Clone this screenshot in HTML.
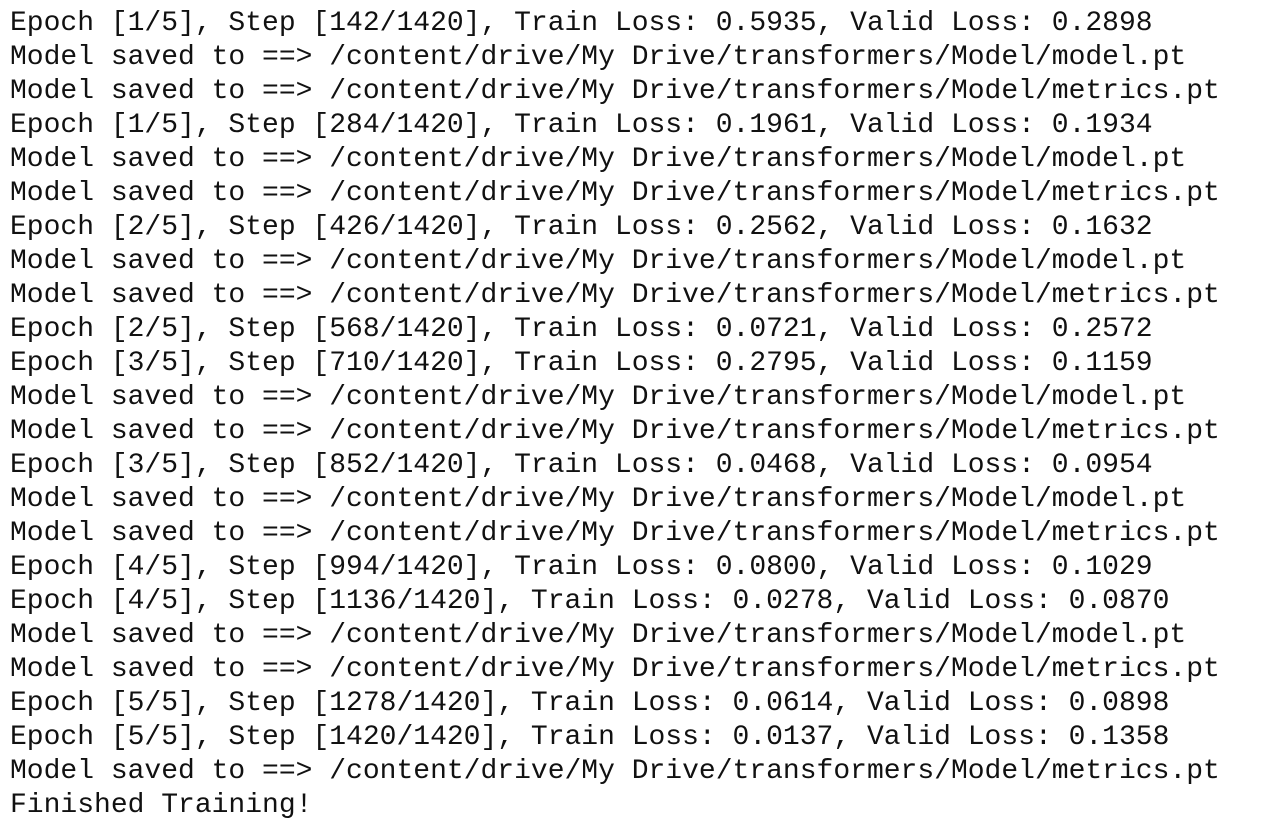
<!DOCTYPE html>
<html><head><meta charset="utf-8"><style>
html,body{margin:0;padding:0;background:#fff;width:1274px;height:826px;overflow:hidden}
pre{margin:0;position:absolute;left:10px;top:7px;font-family:"Liberation Mono",monospace;font-size:28px;line-height:34px;color:#111;white-space:pre}
</style></head><body><pre>Epoch [1/5], Step [142/1420], Train Loss: 0.5935, Valid Loss: 0.2898
Model saved to ==&gt; /content/drive/My Drive/transformers/Model/model.pt
Model saved to ==&gt; /content/drive/My Drive/transformers/Model/metrics.pt
Epoch [1/5], Step [284/1420], Train Loss: 0.1961, Valid Loss: 0.1934
Model saved to ==&gt; /content/drive/My Drive/transformers/Model/model.pt
Model saved to ==&gt; /content/drive/My Drive/transformers/Model/metrics.pt
Epoch [2/5], Step [426/1420], Train Loss: 0.2562, Valid Loss: 0.1632
Model saved to ==&gt; /content/drive/My Drive/transformers/Model/model.pt
Model saved to ==&gt; /content/drive/My Drive/transformers/Model/metrics.pt
Epoch [2/5], Step [568/1420], Train Loss: 0.0721, Valid Loss: 0.2572
Epoch [3/5], Step [710/1420], Train Loss: 0.2795, Valid Loss: 0.1159
Model saved to ==&gt; /content/drive/My Drive/transformers/Model/model.pt
Model saved to ==&gt; /content/drive/My Drive/transformers/Model/metrics.pt
Epoch [3/5], Step [852/1420], Train Loss: 0.0468, Valid Loss: 0.0954
Model saved to ==&gt; /content/drive/My Drive/transformers/Model/model.pt
Model saved to ==&gt; /content/drive/My Drive/transformers/Model/metrics.pt
Epoch [4/5], Step [994/1420], Train Loss: 0.0800, Valid Loss: 0.1029
Epoch [4/5], Step [1136/1420], Train Loss: 0.0278, Valid Loss: 0.0870
Model saved to ==&gt; /content/drive/My Drive/transformers/Model/model.pt
Model saved to ==&gt; /content/drive/My Drive/transformers/Model/metrics.pt
Epoch [5/5], Step [1278/1420], Train Loss: 0.0614, Valid Loss: 0.0898
Epoch [5/5], Step [1420/1420], Train Loss: 0.0137, Valid Loss: 0.1358
Model saved to ==&gt; /content/drive/My Drive/transformers/Model/metrics.pt
Finished Training!</pre></body></html>
